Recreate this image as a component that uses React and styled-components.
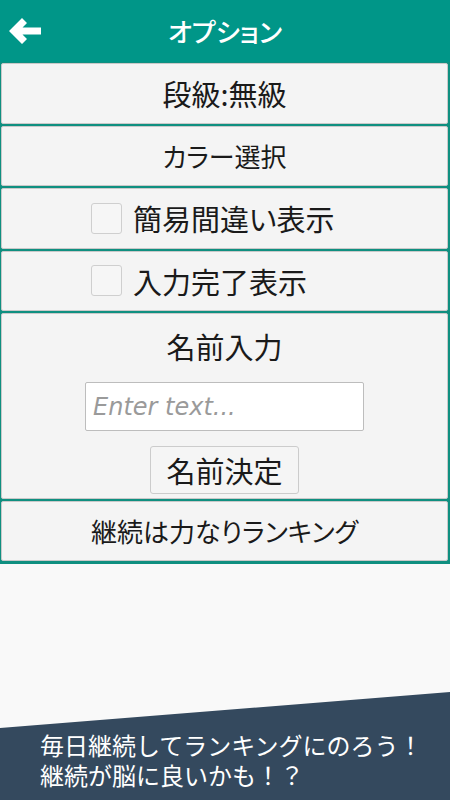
import React from "react";
import styled, { createGlobalStyle } from "styled-components";

const Global = createGlobalStyle`
  html, body { margin: 0; padding: 0; }
  body {
    background: #f9f9f9;
    font-family: "Noto Sans CJK JP", "Noto Sans", sans-serif;
  }
`;

const Page = styled.div`
  width: 450px;
  height: 800px;
  display: flex;
  flex-direction: column;
  background: #f9f9f9;
  overflow: hidden;
`;

const Header = styled.header`
  height: 62px;
  flex: none;
  background: #009688;
  display: grid;
  grid-template-columns: 60px 1fr 60px;
  align-items: center;
`;

const BackButton = styled.div`
  display: flex;
  align-items: center;
  padding-left: 9px;
  height: 100%;
`;

const Title = styled.h1`
  margin: 0;
  text-align: center;
  color: #fff;
  font-size: 26px;
  font-weight: 500;
  font-feature-settings: "palt";
  line-height: 1;
`;

const List = styled.div`
  flex: none;
  background: #0f8f80;
  display: flex;
  flex-direction: column;
  gap: 2px;
  padding: 1px 2px 2.5px 1px;
`;

const Row = styled.div`
  box-sizing: border-box;
  height: ${(p) => (p.$tall ? "185.5px" : "60.5px")};
  background: #f4f4f4;
  border: 1px solid #c9c9c9;
  border-radius: 2px;
  display: flex;
  flex-direction: ${(p) => (p.$tall ? "column" : "row")};
  align-items: center;
  justify-content: ${(p) => (p.$left || p.$tall ? "flex-start" : "center")};
  padding-left: ${(p) => (p.$left ? "89px" : "0")};
  padding-top: ${(p) => (p.$tall ? "14px" : "0")};
  color: #1a1a1a;
`;

const Label = styled.span`
  font-size: ${(p) => p.$size || 28}px;
  font-weight: 400;
  line-height: 36px;
  font-feature-settings: "palt";
  white-space: nowrap;
`;

const Check = styled.span`
  box-sizing: border-box;
  width: 31px;
  height: 31px;
  border: 1px solid #cfcfcf;
  border-radius: 3px;
  background: #f6f6f6;
  margin-right: 11px;
  flex: none;
`;

const NameInput = styled.input`
  box-sizing: border-box;
  margin-top: 18px;
  width: 279px;
  height: 49px;
  background: #fff;
  border: 1px solid #bdbdbd;
  border-radius: 2px;
  padding: 0 7px;
  font-family: "DejaVu Sans", sans-serif;
  font-size: 24px;
  outline: none;
  &::placeholder {
    color: #9a9a9a;
    font-style: italic;
  }
`;

const Button = styled.button`
  box-sizing: border-box;
  margin-top: 15px;
  width: 149px;
  height: 48px;
  background: #f5f5f5;
  border: 1px solid #cccccc;
  border-radius: 3px;
  font-family: "Noto Sans CJK JP", sans-serif;
  font-size: 29px;
  font-weight: 400;
  color: #1a1a1a;
  padding: 0;
  font-feature-settings: "palt";
`;

const Spacer = styled.div`
  flex: 1;
`;

const Banner = styled.footer`
  flex: none;
  height: 108px;
  background: #34495e;
  clip-path: polygon(0 36px, 100% 0, 100% 100%, 0 100%);
  box-sizing: border-box;
  padding: 38px 0 0 40px;
  color: #fff;
  font-size: 24px;
  line-height: 30px;
`;

const BannerLine = styled.div`
  white-space: nowrap;
`;

function BackArrow() {
  return (
    <svg width="32" height="30" viewBox="0 0 32 30" aria-hidden="true">
      <polygon
        fill="#fff"
        points="0,15 13,2 18,7 13.5,11.5 32,11.5 32,18.5 13.5,18.5 18,23 13,28"
      />
    </svg>
  );
}

export default function App() {
  return (
    <>
      <Global />
      <Page>
        <Header>
          <BackButton>
            <BackArrow />
          </BackButton>
          <Title>オプション</Title>
          <div />
        </Header>
        <List>
          <Row>
            <Label $size={29}>段級:無級</Label>
          </Row>
          <Row>
            <Label $size={26}>カラー選択</Label>
          </Row>
          <Row $left>
            <Check />
            <Label $size={29}>簡易間違い表示</Label>
          </Row>
          <Row $left>
            <Check />
            <Label $size={29}>入力完了表示</Label>
          </Row>
          <Row $tall>
            <Label $size={29}>名前入力</Label>
            <NameInput placeholder="Enter text..." />
            <Button>名前決定</Button>
          </Row>
          <Row>
            <Label $size={26}>継続は力なりランキング</Label>
          </Row>
        </List>
        <Spacer />
        <Banner>
          <BannerLine>毎日継続してランキングにのろう！</BannerLine>
          <BannerLine>継続が脳に良いかも！？</BannerLine>
        </Banner>
      </Page>
    </>
  );
}
